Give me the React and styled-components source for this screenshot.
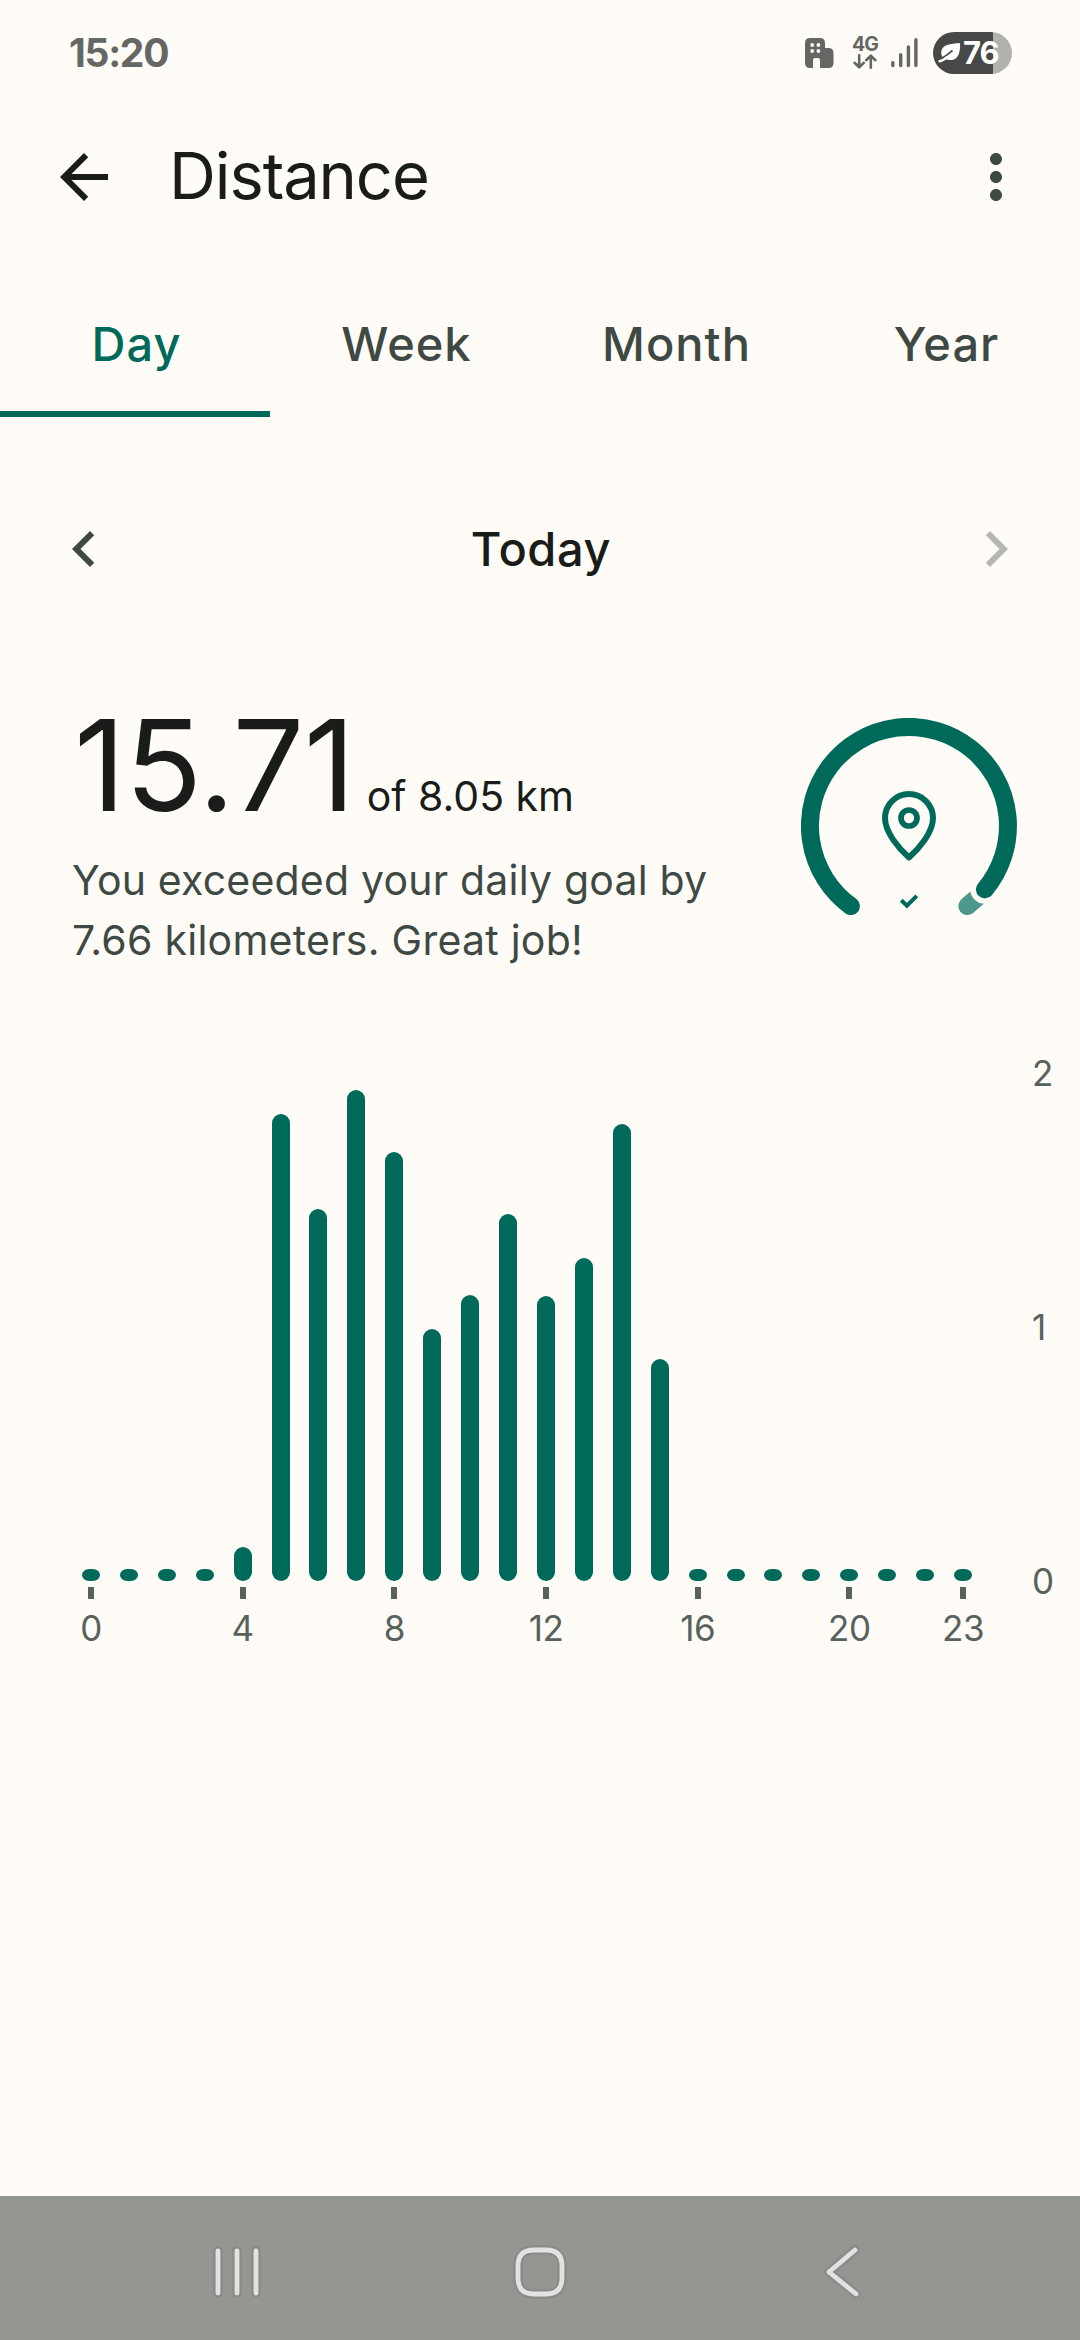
import React from "react";
import styled, { createGlobalStyle } from "styled-components";

const GREEN = "#006a5a";
const INK = "#1a1c19";
const MUTED = "#3f4944";
const AXIS = "#58625d";
const PAPER = "#fffcf7";

const GlobalStyle = createGlobalStyle`
  * { box-sizing: border-box; }
  body { margin: 0; background: ${PAPER}; }
`;

const Page = styled.div`
  width: 1080px;
  height: 2340px;
  display: flex;
  flex-direction: column;
  background: ${PAPER};
  color: ${INK};
  font-family: Inter, Roboto, sans-serif;
  overflow: hidden;
  svg { display: block; flex: none; }
`;

const Label = styled.span`
  display: block;
  white-space: nowrap;
  font-size: ${(p) => p.$size}px;
  line-height: ${(p) => p.$line || 60}px;
  font-weight: ${(p) => p.$weight || 400};
  letter-spacing: ${(p) => p.$track || 0}px;
  color: ${(p) => p.$color || INK};
`;

const StatusBar = styled.header`
  height: 105px;
  padding: 0 68px 0 69px;
  display: flex;
  align-items: center;
  justify-content: space-between;
`;

const StatusIcons = styled.div`
  display: flex;
  align-items: center;
`;

const Network = styled.div`
  width: 26px;
  margin: 0 13px 0 18px;
  display: flex;
  flex-direction: column;
  align-items: center;
  gap: 1px;
`;

const Battery = styled.div`
  width: 79px;
  height: 42px;
  margin-left: 15px;
  padding-left: 5px;
  display: flex;
  align-items: center;
  gap: 2px;
  border-radius: 21px;
  background: linear-gradient(to right, #474947 60px, #b1b1af 60px);
`;

const AppBar = styled.div`
  height: 144px;
  padding: 0 48px;
  display: flex;
  align-items: center;
`;

const Title = styled.h1`
  flex: 1;
  margin: 0 0 3px 49px;
  font-size: 65px;
  line-height: 80px;
  font-weight: 400;
  letter-spacing: -1.1px;
`;

const Tabs = styled.nav`
  height: 147px;
  margin-top: 21px;
  display: grid;
  grid-template-columns: repeat(4, 1fr);
`;

const Tab = styled.div`
  display: flex;
  align-items: center;
  justify-content: center;
  padding-top: 6px;
  padding-left: 3px;
  border-bottom: 6px solid ${(p) => (p.$active ? GREEN : "transparent")};
`;

const DateRow = styled.div`
  height: 72px;
  margin-top: 96px;
  padding: 0 48px;
  display: flex;
  align-items: center;
  justify-content: space-between;
`;

const DateLabel = styled.div`
  padding-left: 2px;
`;

const Summary = styled.section`
  height: 269px;
  margin-top: 116px;
  padding: 0 63px 0 72px;
  display: flex;
  justify-content: space-between;
`;

const ValueRow = styled.div`
  display: flex;
  align-items: baseline;
  padding-left: 2px;
`;

const Goal = styled.div`
  margin-left: 12px;
`;

const Message = styled.div`
  margin-top: 21px;
`;

const RingBox = styled.div`
  margin-top: 17px;
`;

const Chart = styled.section`
  margin-top: 87px;
  padding: 0 0 0 72px;
  display: flex;
`;

const Plot = styled.div`
  width: 910px;
`;

const Columns = styled.div`
  height: ${(p) => p.$height}px;
  display: grid;
  grid-template-columns: repeat(24, 1fr);
  align-items: end;
  justify-items: center;
`;

const Bar = styled.div`
  width: 18px;
  height: ${(p) => p.$height}px;
  border-radius: ${(p) => (p.$height > 18 ? "9px" : "7px / 6px")};
  background: ${GREEN};
`;

const TickRow = styled.div`
  margin-top: 6px;
  display: grid;
  grid-template-columns: repeat(24, 1fr);
`;

const TickCell = styled.div`
  display: flex;
  flex-direction: column;
  align-items: center;
  gap: 13px;
  min-width: 0;
`;

const TickMark = styled.div`
  width: 6px;
  height: 12px;
  background: ${AXIS};
`;

const Scale = styled.div`
  height: 540px;
  margin-left: 50px;
  display: flex;
  flex-direction: column;
  justify-content: space-between;
`;

const SystemNav = styled.footer`
  height: 144px;
  margin-top: auto;
  padding: 7px 202px 0 202px;
  display: flex;
  align-items: center;
  justify-content: space-between;
  background: #949692;
`;

const EMPTY = 12;
const bars = [
  EMPTY, EMPTY, EMPTY, EMPTY, 34.4, 467.7, 372.8, 491.9, 429, 252.6, 286.6, 367.7,
  285.4, 323.8, 457.4, 222.6, EMPTY, EMPTY, EMPTY, EMPTY, EMPTY, EMPTY, EMPTY, EMPTY,
];
const ticks = [0, 4, 8, 12, 16, 20, 23];
const tabs = ["Day", "Week", "Month", "Year"];

const MaterialIcon = ({ d, fill }) => (
  <svg width="72" height="72" viewBox="0 0 24 24" fill={fill}>
    <path d={d} />
  </svg>
);

const BuildingIcon = () => (
  <svg width="29" height="30" viewBox="0 0 29 30">
    <path
      fill="#646763"
      fillRule="evenodd"
      d="M5 0H15Q20 0 20 5V10H23.5Q28.5 10 28.5 15V25Q28.5 30 23.5 30H15V22Q15 20 13 20H10Q8 20 8 22V30H5Q0 30 0 25V5Q0 0 5 0Z"
    />
    <g fill={PAPER}>
      <circle cx="7.2" cy="7" r="1.9" />
      <circle cx="13.4" cy="7" r="1.9" />
      <circle cx="7.2" cy="13" r="1.9" />
      <circle cx="13.4" cy="13" r="1.9" />
    </g>
  </svg>
);

const DataArrows = () => (
  <svg width="24" height="15" viewBox="0 0 24 15" fill="none" stroke="#646763" strokeWidth="2.6" strokeLinecap="round" strokeLinejoin="round">
    <path d="M6.2 1.3V13.2M1.6 8.8L6.2 13.3L10.8 8.8M17.8 13.7V1.8M13.2 6.2L17.8 1.7L22.4 6.2" />
  </svg>
);

const SignalIcon = () => (
  <svg width="27" height="30" viewBox="0 0 27 30" stroke="#646763" strokeWidth="3.4" strokeLinecap="round">
    <path d="M1.8 24.6V27.6M9.7 16.6V27.6M17.4 9V27.6M24.9 1.8V27.6" />
  </svg>
);

const LeafIcon = () => (
  <svg width="23" height="20" viewBox="0 0 23 20">
    <path fill="#fff" d="M22 .3C22.4 6 21.5 12.5 18 15.2C14.5 18 10 17.2 7 15.8C4 14.5 2.8 11.8 3.3 8.6C4.2 2.2 12 .3 22 .3Z" />
    <path fill="none" stroke="#474947" strokeWidth="1.7" d="M14.5 7.5C11.5 10 9 12.4 4 15.2" />
    <path fill="none" stroke="#fff" strokeWidth="2.6" strokeLinecap="round" d="M1.6 18.2C4.5 17.6 6.8 16.2 9 14.5" />
  </svg>
);

const GoalRing = () => (
  <svg width="216" height="216" viewBox="0 0 216 216" fill="none">
    <path stroke="#4d978b" strokeWidth="18" strokeLinecap="round" d="M183.7 171.3A99 99 0 0 1 166.3 188" />
    <circle cx="183.7" cy="171.3" r="14.5" fill={PAPER} />
    <path stroke={GREEN} strokeWidth="18" strokeLinecap="round" d="M49.9 188.1A99 99 0 1 1 183.9 171.4" />
    <path
      stroke={GREEN}
      strokeWidth="6"
      strokeLinejoin="round"
      d="M108 139.4C98 130.6 84 114.5 84 100A24 24 0 0 1 132 100C132 114.5 118 130.6 108 139.4Z"
    />
    <circle cx="108" cy="100" r="8" stroke={GREEN} strokeWidth="5.7" />
    <path stroke={GREEN} strokeWidth="4" d="M100.3 182.2L105.9 187.7L115.8 177.8" />
  </svg>
);

const Outlined = ({ width, height, d }) => (
  <svg width={width} height={height} viewBox={`0 0 ${width} ${height}`} fill="none" strokeLinecap="round" strokeLinejoin="round">
    <path d={d} stroke="#8b8b8b" strokeWidth="9.5" />
    <path d={d} stroke="#e2e2e2" strokeWidth="4.8" />
  </svg>
);

export default function App() {
  return (
    <Page>
      <GlobalStyle />
      <StatusBar>
        <Label $size={39} $weight={700} $track={-1.3} $color="#646763">15:20</Label>
        <StatusIcons>
          <BuildingIcon />
          <Network>
            <Label $size={19.5} $line={17} $weight={700} $track={-1} $color="#646763">4G</Label>
            <DataArrows />
          </Network>
          <SignalIcon />
          <Battery>
            <LeafIcon />
            <Label $size={31} $line={42} $weight={700} $track={-1} $color="#fff">76</Label>
          </Battery>
        </StatusIcons>
      </StatusBar>

      <AppBar>
        <MaterialIcon fill={INK} d="M20 11H7.83l5.59-5.59L12 4l-8 8 8 8 1.41-1.41L7.83 13H20v-2z" />
        <Title>Distance</Title>
        <MaterialIcon
          fill={MUTED}
          d="M12 8c1.1 0 2-.9 2-2s-.9-2-2-2-2 .9-2 2 .9 2 2 2zm0 2c-1.1 0-2 .9-2 2s.9 2 2 2 2-.9 2-2-.9-2-2-2zm0 6c-1.1 0-2 .9-2 2s.9 2 2 2 2-.9 2-2-.9-2-2-2z"
        />
      </AppBar>

      <Tabs>
        {tabs.map((name, i) => (
          <Tab key={name} $active={i === 0}>
            <Label $size={47} $weight={500} $track={1} $color={i === 0 ? GREEN : MUTED}>{name}</Label>
          </Tab>
        ))}
      </Tabs>

      <DateRow>
        <MaterialIcon fill={MUTED} d="M15.41 7.41L14 6l-6 6 6 6 1.41-1.41L10.83 12z" />
        <DateLabel>
          <Label $size={47} $weight={500} $track={0.6}>Today</Label>
        </DateLabel>
        <MaterialIcon fill="#b6b7b4" d="M10 6L8.59 7.41 13.17 12l-4.58 4.59L10 18l6-6z" />
      </DateRow>

      <Summary>
        <div>
          <ValueRow>
            <Label $size={127} $line={128} $track={-0.6}>15.71</Label>
            <Goal>
              <Label $size={41}>of 8.05 km</Label>
            </Goal>
          </ValueRow>
          <Message>
            <Label $size={41} $track={0.2} $color={MUTED}>You exceeded your daily goal by</Label>
            <Label $size={41} $track={0.25} $color={MUTED}>7.66 kilometers. Great job!</Label>
          </Message>
        </div>
        <RingBox>
          <GoalRing />
        </RingBox>
      </Summary>

      <Chart>
        <Plot>
          <Columns $height={524.4}>
            {bars.map((height, hour) => (
              <Bar key={hour} $height={height} />
            ))}
          </Columns>
          <TickRow>
            {bars.map((_, hour) => (
              <TickCell key={hour}>
                {ticks.includes(hour) && (
                  <>
                    <TickMark />
                    <Label $size={35} $line={32} $track={-0.5} $color={AXIS}>{hour}</Label>
                  </>
                )}
              </TickCell>
            ))}
          </TickRow>
        </Plot>
        <Scale>
          {[2, 1, 0].map((n) => (
            <Label key={n} $size={35} $line={32} $color={AXIS}>{n}</Label>
          ))}
        </Scale>
      </Chart>

      <SystemNav>
        <Outlined width={70} height={56} d="M16 7V49M35 7V49M54 7V49" />
        <Outlined width={60} height={60} d="M24 8H36Q52 8 52 24V36Q52 52 36 52H24Q8 52 8 36V24Q8 8 24 8Z" />
        <Outlined width={70} height={56} d="M47 6L21 28L48 50" />
      </SystemNav>
    </Page>
  );
}
